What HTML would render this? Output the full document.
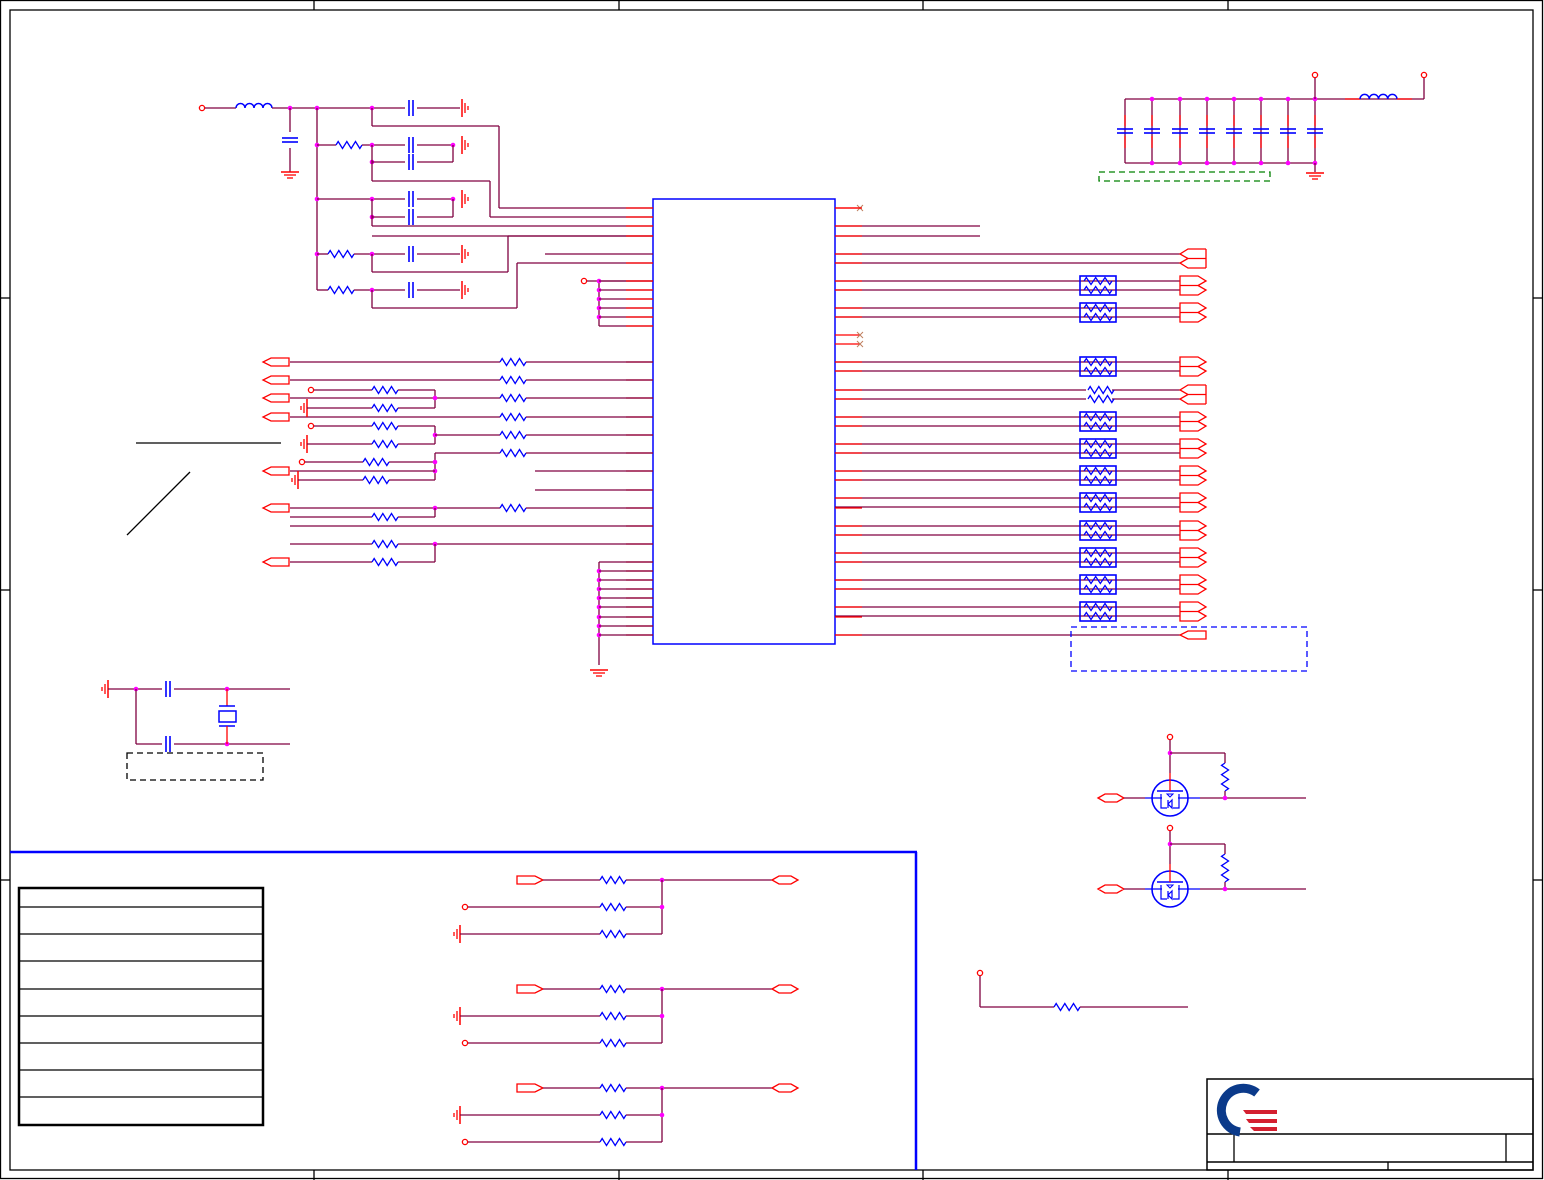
<!DOCTYPE html>
<html><head><meta charset="utf-8"><style>
html,body{margin:0;padding:0;background:#fff;width:1544px;height:1180px;overflow:hidden}
svg{display:block}
</style></head><body>
<svg id="s" width="1544" height="1180" viewBox="0 0 1544 1180" xmlns="http://www.w3.org/2000/svg" fill="none" stroke-width="1.3">
<rect x="0.5" y="0.5" width="1542" height="1178" stroke="#000"/>
<rect x="10" y="10" width="1523" height="1160" stroke="#000" stroke-width="1.3"/>
<g stroke="#000">
<line x1="314" y1="0" x2="314" y2="10"/><line x1="619" y1="0" x2="619" y2="10"/><line x1="923" y1="0" x2="923" y2="10"/><line x1="1228" y1="0" x2="1228" y2="10"/>
<line x1="314" y1="1170" x2="314" y2="1180"/><line x1="619" y1="1170" x2="619" y2="1180"/><line x1="923" y1="1170" x2="923" y2="1180"/><line x1="1228" y1="1170" x2="1228" y2="1180"/>
<line x1="0" y1="298" x2="10" y2="298"/><line x1="0" y1="880" x2="10" y2="880"/><line x1="1533" y1="298" x2="1543" y2="298"/><line x1="1533" y1="880" x2="1543" y2="880"/>
<line x1="0" y1="590" x2="10" y2="590"/><line x1="1533" y1="590" x2="1543" y2="590"/>
<!-- title block -->
<rect x="1207" y="1079" width="326" height="91" stroke-width="1.5"/>
<line x1="1207" y1="1134" x2="1533" y2="1134" stroke-width="1.5"/>
<line x1="1207" y1="1162" x2="1533" y2="1162" stroke-width="1.5"/>
<line x1="1234" y1="1134" x2="1234" y2="1162"/>
<line x1="1506" y1="1134" x2="1506" y2="1162"/>
<line x1="1388" y1="1162" x2="1388" y2="1170"/>
<!-- table -->
<rect x="19" y="888" width="244" height="237" stroke-width="2.5"/>
<line x1="136" y1="443" x2="281" y2="443"/>
<line x1="127" y1="535" x2="190" y2="472"/>
</g>
<!-- logo -->
<path d="M1257 1093 A22 22 0 1 0 1240 1132" stroke="#0b3a8a" stroke-width="9"/>
<path d="M1243 1110 H1277 V1114 H1246Z M1246 1119 H1277 V1123 H1249Z M1250 1127 H1277 V1131 H1254Z" fill="#d42030" stroke="none"/>
<g stroke="#000">
<line x1="1310" y1="1134" x2="1310" y2="1134"/>
</g>
<g id="g"></g>
</svg>
<script>
var G=document.getElementById('g'),NS='http://www.w3.org/2000/svg';
function el(t,a){var e=document.createElementNS(NS,t);for(var k in a)e.setAttribute(k,a[k]);G.appendChild(e);return e;}
var W='#800040',R='#ff0000',B='#0000ff',M='#ff00ff';
function L(x1,y1,x2,y2,c,w){el('line',{x1:x1,y1:y1,x2:x2,y2:y2,stroke:c||W,'stroke-width':w||1.3});}
function P(d,c,w,f){el('path',{d:d,stroke:c||W,'stroke-width':w||1.3,fill:f||'none'});}
function dot(x,y){el('circle',{cx:x,cy:y,r:2.3,fill:M,stroke:'none'});}
function oc(x,y){el('circle',{cx:x,cy:y,r:2.6,stroke:R,fill:'#fff'});}
function res(x,y,w){w=w||26;var d='M'+x+' '+y,n=6,s=w/n;for(var i=0;i<n;i++){d+=' L'+(x+s*i+s/2)+' '+(y+(i%2?3.5:-3.5));}d+=' L'+(x+w)+' '+y;P(d,B);}
function resV(x,y,h){var d='M'+x+' '+y,n=6,s=h/n;for(var i=0;i<n;i++){d+=' L'+(x+(i%2?3.5:-3.5))+' '+(y+s*i+s/2);}d+=' L'+x+' '+(y+h);P(d,B);}
function capH(x,y){L(x-2,y-8,x-2,y+8,B,1.6);L(x+2,y-8,x+2,y+8,B,1.6);}
function capV(x,y){L(x-8,y-2,x+8,y-2,B,1.6);L(x-8,y+2,x+8,y+2,B,1.6);}
function gndR(x,y){/* ground pointing right (vertical bars) */L(x,y-9,x,y+9,R,1.5);L(x+3,y-5,x+3,y+5,R);L(x+6,y-2,x+6,y+2,R);}
function gndL(x,y){L(x,y-9,x,y+9,R,1.5);L(x-3,y-5,x-3,y+5,R);L(x-6,y-2,x-6,y+2,R);}
function gndD(x,y){L(x-9,y,x+9,y,R,1.5);L(x-6,y+3,x+6,y+3,R);L(x-3,y+6,x+3,y+6,R);}
function ind(x,y,w){var d='M'+x+' '+y,n=4,s=w/n;for(var i=0;i<n;i++){d+=' a'+(s/2)+' '+(s/2)+' 0 0 1 '+s+' 0';}P(d,B,1.5);}
function portR(x,y){P('M'+x+' '+(y-4)+' H'+(x+18)+' L'+(x+26)+' '+y+' L'+(x+18)+' '+(y+4)+' H'+x+' Z',R);}
function portL(x,y){P('M'+(x+26)+' '+(y-4)+' H'+(x+8)+' L'+x+' '+y+' L'+(x+8)+' '+(y+4)+' H'+(x+26)+' Z',R);}
function portB(x,y){P('M'+x+' '+y+' L'+(x+7)+' '+(y-4)+' H'+(x+19)+' L'+(x+26)+' '+y+' L'+(x+19)+' '+(y+4)+' H'+(x+7)+' Z',R);}
function rpack(x,y){el('rect',{x:x,y:y-5,width:36,height:19,stroke:B,'stroke-width':1.6,fill:'none'});res(x+4,y,28);res(x+4,y+9,28);}

// IC
el('rect',{x:653,y:199,width:182,height:445,stroke:B,'stroke-width':1.5,fill:'none'});
var p=9.1;
// right side
function ry(i){return 208+i*p;}
L(835,208,860,208,R);P('M857 205 l6 6 M863 205 l-6 6','#c08060',1);
L(835,226,980,226);L(835,236,980,236);
L(835,254,1180,254);L(835,263,1180,263);
P('M1206 249 V268 M1206 249 H1188 L1180 254 L1188 258.5 L1180 263 L1188 268 H1206 M1188 258.5 H1206',R);
var rows=[[281,1],[308,1],[362,1],[390,2],[417,1],[444,1],[471,1],[498,1],[526,1],[553,1],[580,1],[607,1]];
rows.forEach(function(r){var y=r[0];L(835,y,1180,y);L(835,y+9,1180,y+9);
 if(r[1]==1){rpack(1080,y);P('M1180 '+(y-5)+' H1198 L1206 '+y+' L1198 '+(y+4.5)+' L1206 '+(y+9)+' L1198 '+(y+14)+' H1180 Z M1180 '+(y+4.5)+' H1198',R);}
 else{el('rect',{x:1086,y:y-5,width:26,height:19,fill:'#fff',stroke:'none'});res(1088,y,26);res(1088,y+9,26);P('M1206 '+(y-5)+' V'+(y+14)+' M1206 '+(y-5)+' H1188 L1180 '+y+' L1188 '+(y+4.5)+' L1180 '+(y+9)+' L1188 '+(y+14)+' H1206 M1188 '+(y+4.5)+' H1206',R);}
});
L(835,335,860,335,R);L(835,344,860,344,R);
P('M857 332 l6 6 M863 332 l-6 6 M857 341 l6 6 M863 341 l-6 6','#c08060',1);
L(835,635,1180,635);portL(1180,635);
el('rect',{x:1071,y:627,width:236,height:44,stroke:B,'stroke-dasharray':'6 4',fill:'none'});
// red stubs near IC
[208,226,236,254,263,281,290,308,317,362,371,390,399,417,426,444,453,471,480,498,508,526,535,553,562,580,589,607,617,635].forEach(function(y){L(835,y,862,y,R);});

// left side top power section
oc(202,108);L(205,108,236,108);ind(236,108,36);L(272,108,372,108);dot(290,108);dot(317,108);
L(290,108,290,132);capV(290,140);L(290,148,290,172);gndD(290,172);
L(317,108,317,290);
L(372,108,405,108);capH(411,108);L(417,108,460,108);gndR(462,108);dot(372,108);
L(372,108,372,126);L(372,126,499,126);L(499,126,499,208);L(499,208,653,208);
dot(317,145);L(317,145,336,145);res(336,145,26);L(362,145,405,145);dot(372,145);capH(411,145);L(417,145,453,145);dot(453,145);gndR(462,145);
dot(372,162);L(372,162,405,162);capH(411,162);L(417,162,453,162);L(453,145,453,162);
L(372,145,372,181);L(372,181,490,181);L(490,181,490,217);L(490,217,653,217);
dot(317,199);L(317,199,405,199);dot(372,199);capH(411,199);L(417,199,453,199);dot(453,199);gndR(462,199);
dot(372,217);L(372,217,405,217);capH(411,217);L(417,217,453,217);L(453,199,453,217);
L(372,199,372,226);L(372,226,653,226);L(372,236,653,236);
dot(317,254);L(317,254,328,254);res(328,254,26);L(354,254,405,254);dot(372,254);capH(411,254);L(417,254,460,254);gndR(462,254);
L(372,254,372,272);L(372,272,508,272);L(508,272,508,236);L(508,236,653,236);
L(545,254,653,254);
L(317,290,328,290);res(328,290,26);L(354,290,405,290);dot(372,290);capH(411,290);L(417,290,460,290);gndR(462,290);
L(372,290,372,308);L(372,308,517,308);L(517,308,517,263);L(517,263,653,263);
oc(584,281);L(587,281,653,281);L(599,281,599,326);[281,290,299,308,317].forEach(function(y){dot(599,y);L(599,y,653,y);});L(599,326,653,326);
// left IC pin red stubs
[208,217,226,236,263,281,290,299,308,317,326,362,380,398,417,435,453,471,490,508,526,544,562,571,580,589,598,607,617,626,635].forEach(function(y){L(626,y,653,y,R);});

// left signal rows
[362,380,398,417].forEach(function(y){portL(263,y);L(290,y,500,y);res(500,y,26);L(526,y,653,y);});
oc(311,390);L(314,390,372,390);res(372,390,26);L(398,390,435,390);L(435,390,435,408);dot(435,398);
gndL(307,408);L(307,408,372,408);res(372,408,26);L(398,408,435,408);
oc(311,426);L(314,426,372,426);res(372,426,26);L(398,426,435,426);L(435,426,435,444);dot(435,435);L(435,435,500,435);res(500,435,26);L(526,435,653,435);
gndL(307,444);L(307,444,372,444);res(372,444,26);L(398,444,435,444);
oc(302,462);L(305,462,363,462);res(363,462,26);L(389,462,435,462);L(435,453,435,480);dot(435,462);dot(435,471);L(435,453,500,453);res(500,453,26);L(526,453,653,453);
portL(263,471);L(290,471,435,471);
gndL(298,480);L(298,480,363,480);res(363,480,26);L(389,480,435,480);
L(535,471,653,471);L(535,490,653,490);
portL(263,508);L(290,508,500,508);dot(435,508);res(500,508,26);L(526,508,653,508);
L(290,517,372,517);res(372,517,26);L(398,517,435,517);L(435,508,435,517);
L(290,526,653,526);
L(290,544,372,544);res(372,544,26);L(398,544,653,544);dot(435,544);L(435,544,435,562);
portL(263,562);L(290,562,372,562);res(372,562,26);L(398,562,435,562);
// bottom left IC pins ground
L(599,562,599,665);[571,580,589,598,607,617,626,635].forEach(function(y){dot(599,y);L(599,y,653,y);});L(599,562,653,562);gndD(599,670);

// crystal
gndL(108,689);L(108,689,162,689);dot(136,689);capH(168,689);L(174,689,290,689);dot(227,689);
L(136,689,136,744);L(136,744,162,744);capH(168,744);L(174,744,290,744);dot(227,744);
L(227,689,227,706,R);L(219,706,235,706,B,1.5);el('rect',{x:219,y:711,width:17,height:11,stroke:B,'stroke-width':1.5,fill:'none'});L(219,726,235,726,B,1.5);L(227,726,227,744,R);
el('rect',{x:127,y:753,width:136,height:27,stroke:'#000','stroke-dasharray':'6 4',fill:'none'});

// top right caps
L(1125,99,1424,99);L(1125,163,1315,163);
[1125,1152,1180,1207,1234,1261,1288,1315].forEach(function(x,i){L(x,99,x,163);L(x,115,x,126,R);L(x,136,x,148,R);capV(x,131);if(i>0){dot(x,99);dot(x,163);}});
oc(1315,75);L(1315,78,1315,99);L(1315,163,1315,172);gndD(1315,173);
L(1345,99,1360,99,R);ind(1360,99,37);L(1397,99,1412,99,R);L(1424,78,1424,99);oc(1424,75);
el('rect',{x:1099,y:172,width:171,height:9,stroke:'#008000','stroke-dasharray':'6 4',fill:'none'});

// mosfets
function fet(y){var x=1170;oc(x,y-61);L(x,y-58,x,y-25);dot(x,y-45);L(x,y-45,1225,y-45);resV(1225,y-35,28);L(1225,y-45,1225,y-35);L(1225,y-7,1225,y);
 portB(1098,y);L(1124,y,1145,y);el('circle',{cx:x,cy:y,r:18,stroke:B,'stroke-width':1.6,fill:'none'});
 L(1145,y,1162,y,B);L(1178,y,1200,y,B);L(1157,y-7,1183,y-7,B,1.6);L(x,y-25,x,y-7,R);
 P('M1161 '+(y-4)+' V'+(y+10)+' H1167 M1179 '+(y-4)+' V'+(y+10)+' H1173 M1168 '+(y+6)+' L1172 '+(y+2)+' L1172 '+(y+10)+' Z M1168 '+(y+2)+' V'+(y+10),B,1.2);
 P('M1167 '+(y-4)+' h6 l-3 3 z',B,1);
 L(1200,y,1306,y);dot(1225,y);}
fet(798);fet(889);

// bottom right resistor
oc(980,973);L(980,976,980,1007);L(980,1007,1054,1007);res(1054,1007,26);L(1080,1007,1188,1007);

// bottom blue region
L(10,852,917,852,B,2.5);L(916,852,916,1170,B,2.5);
[907,934,961,989,1016,1043,1070,1097].forEach(function(y){L(19,y,263,y,'#000',1.3);});
function grp(y,second){portR(517,y);L(543,y,600,y);res(600,y,26);L(626,y,772,y);dot(662,y);portB(772,y);
 var a=y+27,b=y+54;
 if(second){gndL(460,a);L(460,a,600,a);oc(465,b);L(468,b,600,b);}else{oc(465,a);L(468,a,600,a);gndL(460,b);L(460,b,600,b);}
 res(600,a,26);res(600,b,26);L(626,a,662,a);L(626,b,662,b);L(662,y,662,b);dot(662,a);}
grp(880,false);grp(989,true);grp(1088,true);
</script>
</body></html>
